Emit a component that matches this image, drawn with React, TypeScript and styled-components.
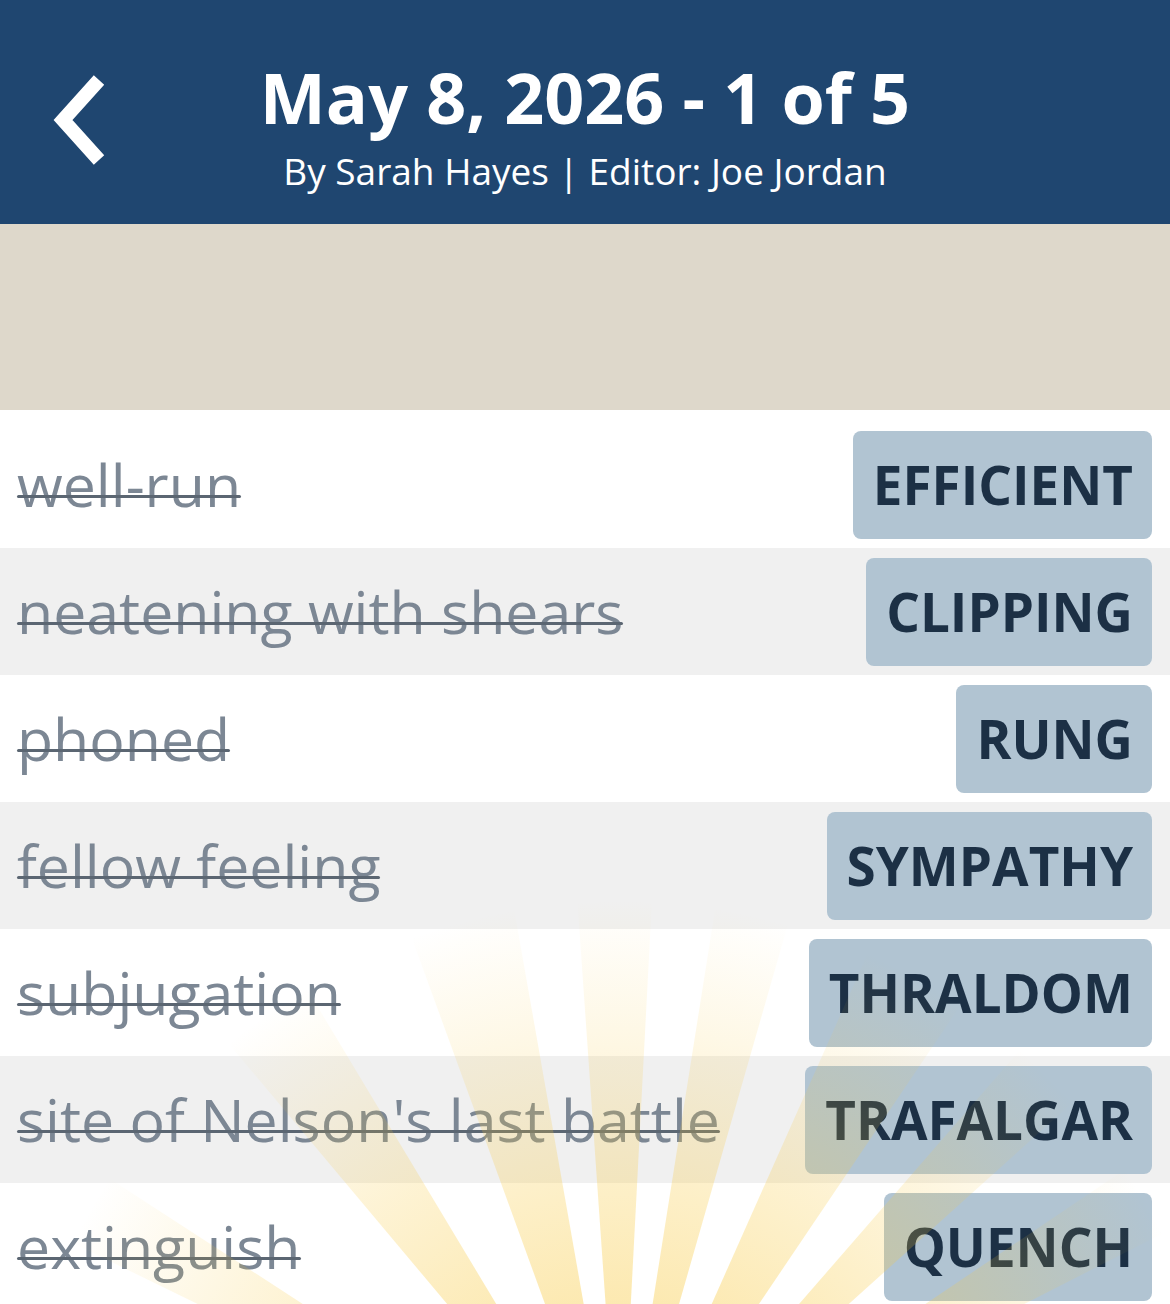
import React from 'react';
import styled, { createGlobalStyle } from 'styled-components';

const GlobalStyle = createGlobalStyle`
  body {
    margin: 0;
    background: #ffffff;
    font-family: "Open Sans", "Noto Sans", sans-serif;
  }
`;

const Page = styled.div`
  position: relative;
  width: 1170px;
  height: 1304px;
  overflow: hidden;
  background: #ffffff;
`;

const Header = styled.header`
  height: 224px;
  background: #1f4670;
  display: grid;
  grid-template-columns: 180px 1fr 180px;
  color: #ffffff;
`;

const BackButton = styled.button`
  align-self: start;
  margin: 70px 0 0 44px;
  padding: 0;
  width: 70px;
  height: 100px;
  border: none;
  background: transparent;
  cursor: pointer;
  display: flex;
  align-items: center;
  justify-content: center;
`;

const TitleBlock = styled.div`
  display: flex;
  flex-direction: column;
  align-items: center;
  padding-top: 57px;
`;

const Title = styled.h1`
  margin: 0;
  font-size: 70px;
  line-height: 80px;
  font-weight: 700;
  white-space: nowrap;
`;

const Byline = styled.div`
  margin-top: 12px;
  font-size: 37px;
  line-height: 44px;
  font-weight: 400;
  white-space: nowrap;
`;

const Banner = styled.div`
  height: 186px;
  background: #ded8cb;
`;

const List = styled.ul`
  list-style: none;
  margin: 0;
  padding: 11px 0 0;
`;

const Row = styled.li<{ $shaded: boolean }>`
  height: 127px;
  display: flex;
  align-items: center;
  justify-content: space-between;
  padding: 0 18px 0 17px;
  background: ${(p) => (p.$shaded ? '#f0f0f0' : '#ffffff')};
`;

const Clue = styled.span`
  position: relative;
  font-size: 59px;
  line-height: 1;
  color: #7c8794;
  white-space: nowrap;

  /* solved clues get a dark strike a little under the x-height middle */
  &::after {
    content: '';
    position: absolute;
    left: 0;
    right: 0;
    bottom: 16px;
    height: 3px;
    background: #5b6672;
    border-radius: 2px;
  }
`;

const Answer = styled.span`
  height: 108px;
  display: flex;
  align-items: center;
  padding: 0 19px 0 20px;
  border-radius: 8px;
  background: #b1c4d2;
  color: #1c3045;
  font-size: 53px;
  font-weight: 700;
  white-space: nowrap;
`;

const Rays = styled.svg`
  position: absolute;
  inset: 0;
  pointer-events: none;
`;

const solved = [
  { clue: 'well-run', answer: 'EFFICIENT' },
  { clue: 'neatening with shears', answer: 'CLIPPING' },
  { clue: 'phoned', answer: 'RUNG' },
  { clue: 'fellow feeling', answer: 'SYMPATHY' },
  { clue: 'subjugation', answer: 'THRALDOM' },
  { clue: "site of Nelson's last battle", answer: 'TRAFALGAR' },
  { clue: 'extinguish', answer: 'QUENCH' },
];

// sunburst wedges, degrees from straight up around the burst centre
const wedges: [number, number][] = [
  [-64, -57],
  [-40, -31],
  [-20, -10],
  [-4, 3],
  [9, 16],
  [24, 34],
  [41, 48],
  [56, 63],
];

const CX = 620;
const CY = 1510;
const R = 1000;

const wedgePath = ([a, b]: [number, number]) => {
  const p = (deg: number) => {
    const r = (deg * Math.PI) / 180;
    return `${(CX + R * Math.sin(r)).toFixed(1)} ${(CY - R * Math.cos(r)).toFixed(1)}`;
  };
  return `M${CX} ${CY} L${p(a)} L${p(b)} Z`;
};

const Chevron = () => (
  <svg width="60" height="96" viewBox="0 0 60 96">
    <polyline
      points="50,8 14,48 50,88"
      fill="none"
      stroke="#ffffff"
      strokeWidth="14"
      strokeLinejoin="miter"
      strokeLinecap="butt"
    />
  </svg>
);

export default function App() {
  return (
    <Page>
      <GlobalStyle />
      <Header>
        <BackButton aria-label="Back">
          <Chevron />
        </BackButton>
        <TitleBlock>
          <Title>May 8, 2026 - 1 of 5</Title>
          <Byline>By Sarah Hayes | Editor: Joe Jordan</Byline>
        </TitleBlock>
        <div />
      </Header>
      <Banner />
      <List>
        {solved.map((item, i) => (
          <Row key={item.answer} $shaded={i % 2 === 1}>
            <Clue>{item.clue}</Clue>
            <Answer>{item.answer}</Answer>
          </Row>
        ))}
      </List>
      <Rays width="1170" height="1304" viewBox="0 0 1170 1304">
        <defs>
          <radialGradient id="burstFade" gradientUnits="userSpaceOnUse" cx={CX} cy={CY} r="610">
            <stop offset="0" stopColor="#f8c93f" stopOpacity="0.5" />
            <stop offset="0.35" stopColor="#f8c93f" stopOpacity="0.4" />
            <stop offset="1" stopColor="#f8c93f" stopOpacity="0" />
          </radialGradient>
        </defs>
        {wedges.map((w) => (
          <path key={w[0]} d={wedgePath(w)} fill="url(#burstFade)" />
        ))}
      </Rays>
    </Page>
  );
}
